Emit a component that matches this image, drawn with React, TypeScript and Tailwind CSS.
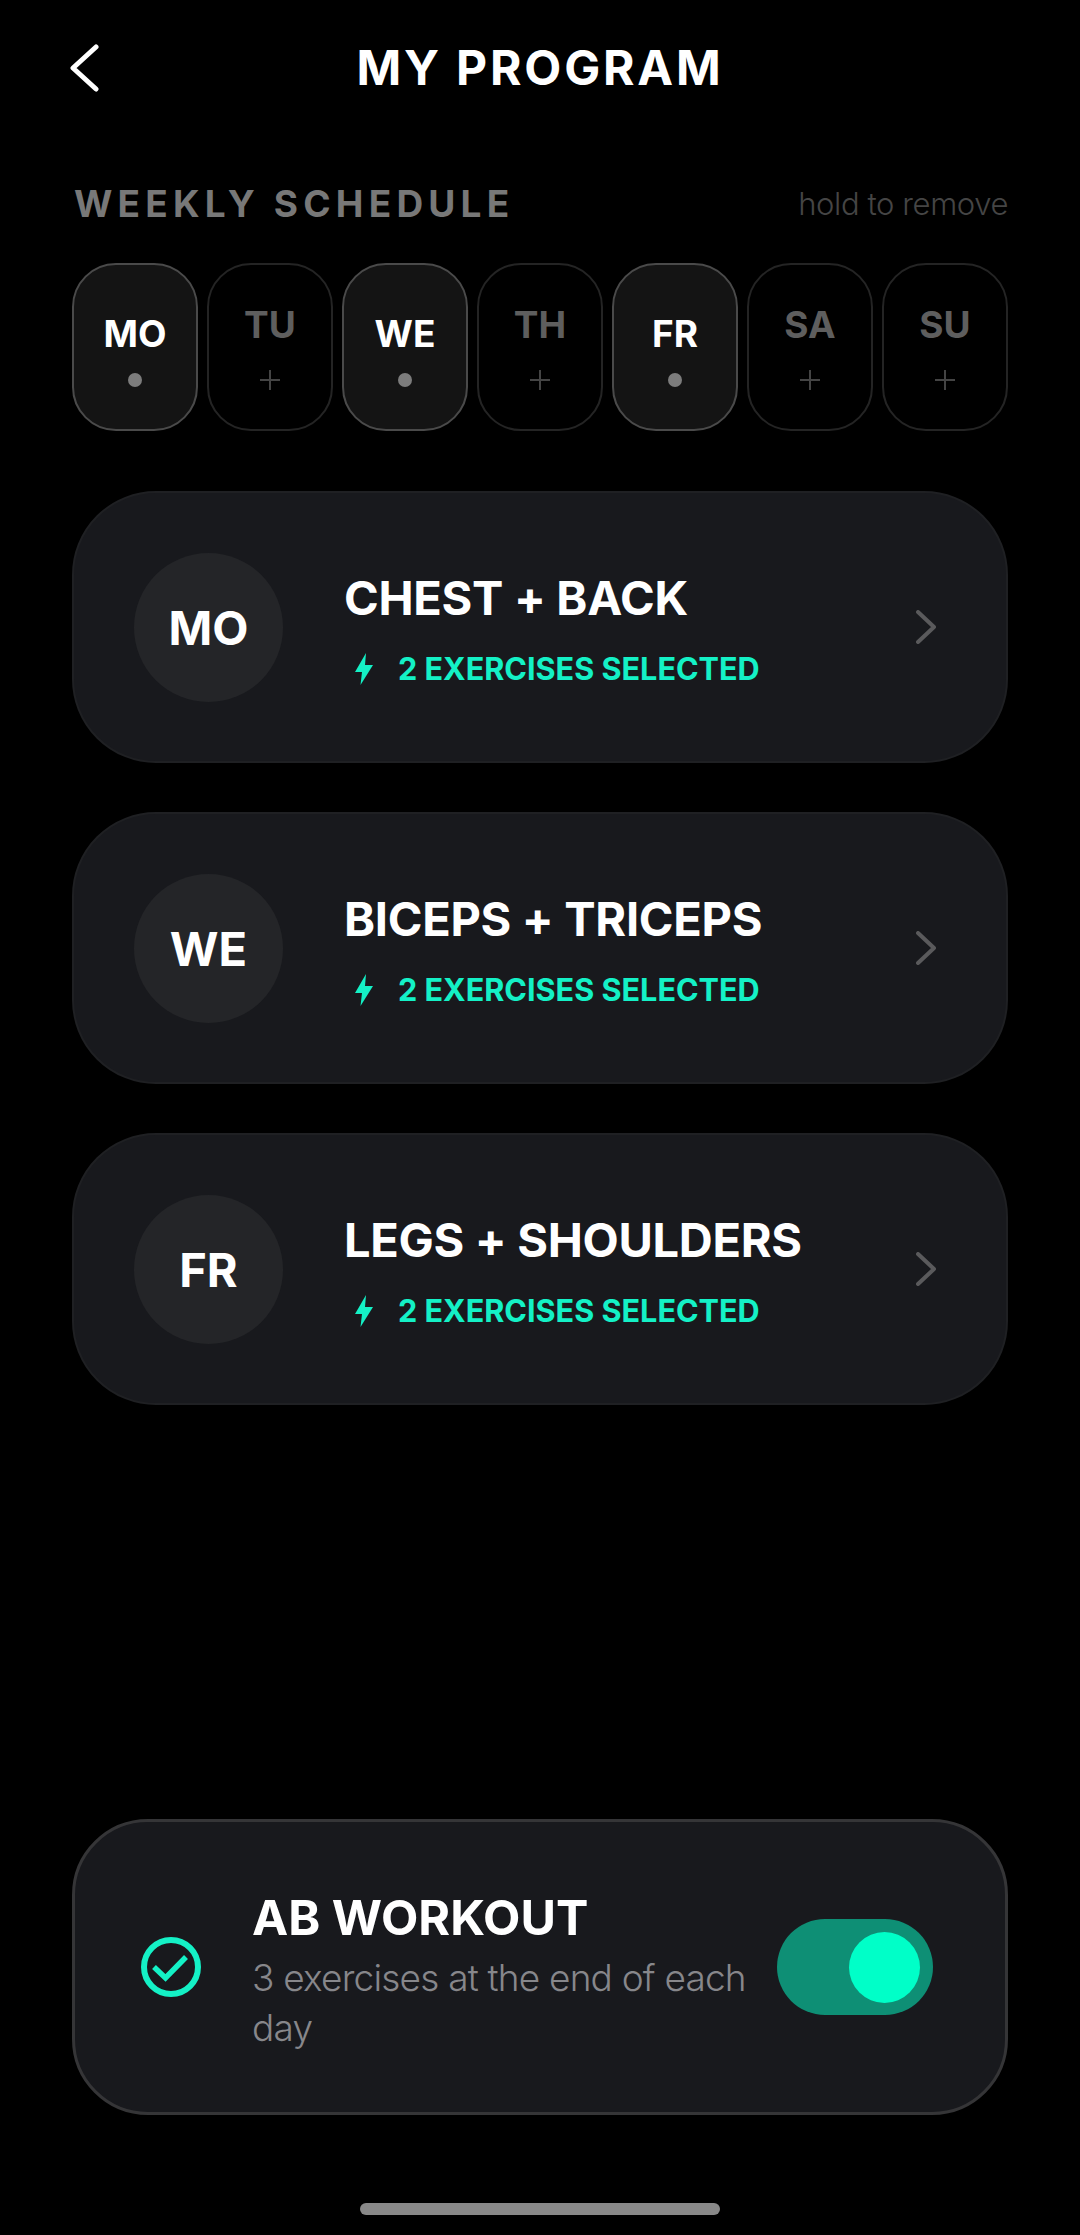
const days = [
  { d: "MO", on: true }, { d: "TU", on: false }, { d: "WE", on: true }, { d: "TH", on: false },
  { d: "FR", on: true }, { d: "SA", on: false }, { d: "SU", on: false },
];
const cards = [
  { d: "MO", t: "CHEST + BACK" },
  { d: "WE", t: "BICEPS + TRICEPS" },
  { d: "FR", t: "LEGS + SHOULDERS" },
];

function Day({ d, on }: { d: string; on: boolean }) {
  return (
    <div className={on
      ? "w-[126px] h-[168px] rounded-[44px] border-2 border-[#4a4a4a] bg-[#141414] flex flex-col items-center"
      : "w-[126px] h-[168px] rounded-[44px] border-2 border-[#242424] bg-black flex flex-col items-center"}>
      {on ? (
        <>
          <span className="mt-[44px] text-[37px] leading-[50px] font-bold text-white">{d}</span>
          <span className="mt-[14px] w-[14px] h-[14px] rounded-full bg-[#7c7c7c]" />
        </>
      ) : (
        <>
          <span className="mt-[35px] text-[37px] leading-[50px] font-bold text-[#5e5e5e]">{d}</span>
          <svg className="mt-[20px]" width="20" height="20" viewBox="0 0 20 20" stroke="#444" strokeWidth="2"><path d="M10 0v20M0 10h20" /></svg>
        </>
      )}
    </div>
  );
}

function Card({ d, t }: { d: string; t: string }) {
  return (
    <div className="h-[272px] rounded-[84px] border-2 border-[#1f2023] bg-[#18191d] flex items-center pl-[60px] pr-[70px]">
      <div className="w-[149px] h-[149px] rounded-full bg-[#242528] flex items-center justify-center pt-[2px] text-[47px] font-bold text-white">{d}</div>
      <div className="ml-[61px] mt-[4px] flex-1 flex flex-col">
        <div className="text-[47px] leading-[58px] font-bold tracking-[-0.3px] text-white">{t}</div>
        <div className="mt-[22px] flex items-center">
          <svg className="ml-[11px]" width="18" height="32" viewBox="0 0 18 32" fill="#14f1c6"><path d="M11 0 L0 19 H7 L5.5 32 L18 12 H10 Z" /></svg>
          <span className="ml-[25px] text-[30.6px] leading-[40px] font-bold text-[#14f1c6]">2 EXERCISES SELECTED</span>
        </div>
      </div>
      <svg width="20" height="34" viewBox="0 0 20 34" fill="none" stroke="#5a5a5c" strokeWidth="4" strokeLinecap="round" strokeLinejoin="round"><path d="M2 2 L18 17 L2 32" /></svg>
    </div>
  );
}

export default function App() {
  return (
    <div className="w-[1080px] h-[2235px] bg-black flex flex-col font-['Inter',sans-serif] overflow-hidden">
      <header className="relative h-[136px] flex items-center justify-center">
        <svg className="absolute left-[69px] top-[44px]" width="30" height="48" viewBox="0 0 30 48" fill="none" stroke="#fff" strokeWidth="5" strokeLinecap="round" strokeLinejoin="round"><path d="M27 3 L4 24 L27 45" /></svg>
        <h1 className="text-[48px] font-bold tracking-[2.8px] text-white">MY PROGRAM</h1>
      </header>
      <main className="flex-1 flex flex-col px-[72px]">
        <div className="mt-[46px] flex items-center justify-between h-[44px]">
          <span className="ml-[2px] text-[37px] font-bold tracking-[5.2px] text-[#787878]">WEEKLY SCHEDULE</span>
          <span className="text-[31px] font-light tracking-[-0.4px] text-[#454545]">hold to remove</span>
        </div>
        <div className="mt-[37px] flex gap-[9px]">
          {days.map((x) => <Day key={x.d} {...x} />)}
        </div>
        <div className="mt-[60px] flex flex-col gap-[49px]">
          {cards.map((c) => <Card key={c.d} {...c} />)}
        </div>
        <div className="mt-auto h-[296px] rounded-[76px] border-[3px] border-[#353537] bg-[#18191d] flex items-center pl-[66px] pr-[72px]">
          <svg className="shrink-0" width="60" height="60" viewBox="0 0 60 60" fill="none" stroke="#14f1c6"><circle cx="30" cy="30" r="27" strokeWidth="6" /><path d="M13 30 L24.5 41 L45 20" strokeWidth="5.5" /></svg>
          <div className="ml-[51px] flex-1 flex flex-col mt-[7px]">
            <div className="text-[48.5px] leading-[60px] font-bold text-white">AB WORKOUT</div>
            <div className="mt-[5px] text-[37px] leading-[50px] font-light tracking-[-0.8px] text-[#87878b]">3 exercises at the end of each day</div>
          </div>
          <div className="shrink-0 ml-[24px] w-[156px] h-[96px] rounded-full bg-[#0e8f75] flex items-center justify-end pr-[13px]">
            <div className="w-[71px] h-[71px] rounded-full bg-[#00ffc8]" />
          </div>
        </div>
      </main>
      <div className="h-[120px] flex justify-center pt-[88px]">
        <div className="w-[360px] h-[12px] rounded-full bg-[#888]" />
      </div>
    </div>
  );
}
